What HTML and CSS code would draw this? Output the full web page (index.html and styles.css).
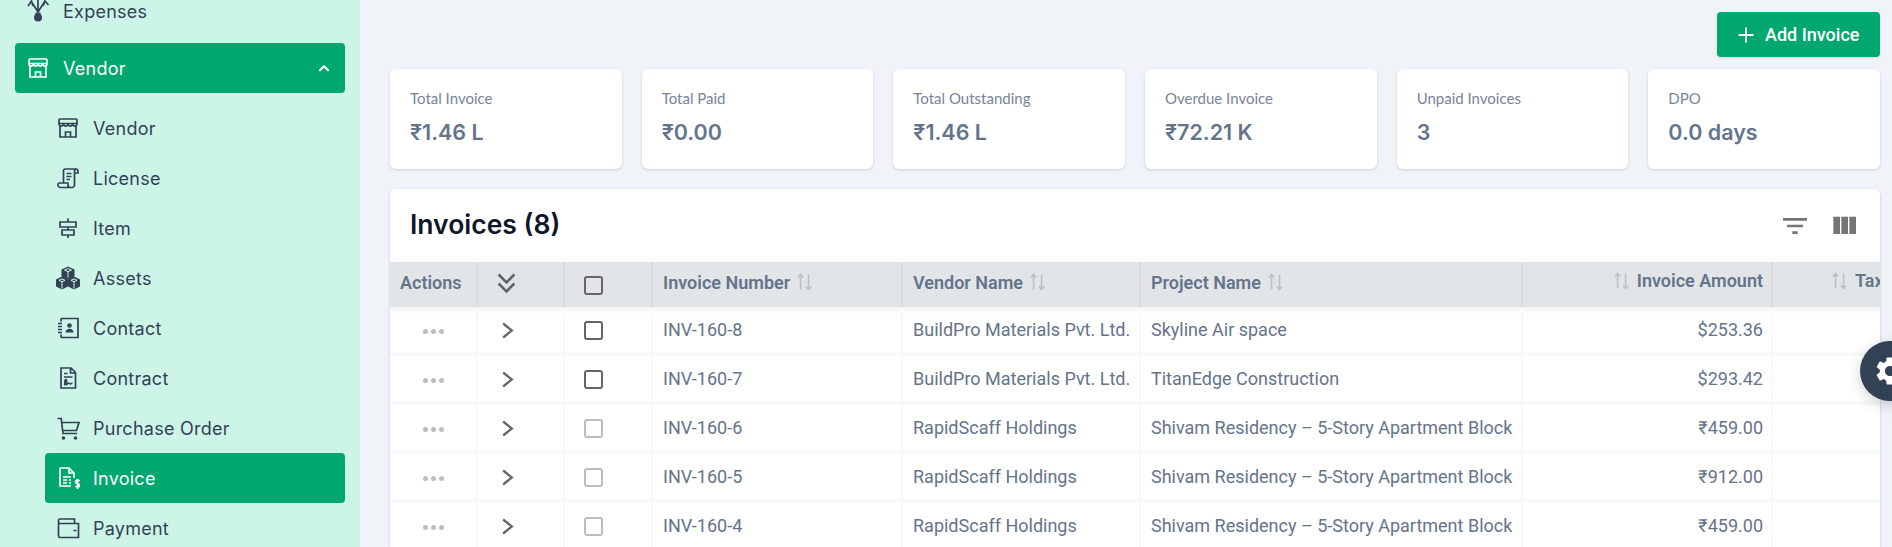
FILE: index.html
```html
<!DOCTYPE html>
<html lang="en">
<head>
<meta charset="utf-8">
<title>Invoices</title>
<link rel="stylesheet" href="styles.css">
</head>
<body>
<svg class="defs" aria-hidden="true">
  <symbol id="i-store" viewBox="0 0 24 24"><path d="M4 3h16a1 1 0 0 1 1 1v3.500H3V4a1 1 0 0 1 1-1zM3 7.500c0 3.500 4 3.500 4.500 0 .5 3.500 4 3.500 4.500 0 .5 3.500 4 3.500 4.500 0 .5 3.500 4.500 3.500 4.500 0M4 10.500V21h16V10.500M9.500 21v-5h5v5"/></symbol>
  <symbol id="i-scroll" viewBox="0 0 24 24"><path d="M7.500 17V5a2 2 0 0 1 2-2H20a2 2 0 0 1 2 2v2h-3.500M20 3a2 2 0 0 0-1.500 2v14a2.500 2.500 0 0 1-2.500 2.500H4.500A2.500 2.500 0 0 1 2 19v-.5a1.500 1.500 0 0 1 1.500-1.500H12v2a2.500 2.500 0 0 0 2 2.500M10.500 7.500h5M10.500 10.500h5M10.500 13.500h3.500"/></symbol>
  <symbol id="i-sign" viewBox="0 0 24 24"><path d="M12 2.500v3.500M12 11v3M12 19v3M4 6h16v5H4zM6 14h12v5H6z"/></symbol>
  <symbol id="i-cubes" viewBox="0 0 24 24"><g class="solid"><path d="M12 .5l6.500 3v7L12 13.500l-6.500-3v-7z"/><path d="M6 10.500l6 2.800v7.200L6 23.500l-6-3v-7z"/><path d="M18 10.500l6 3v7l-6 3-6-3v-7z"/></g><g class="cut"><path d="M12 2.600l3.500 1.500L12 5.700 8.500 4.100zM6 13l3 1.300-3 1.500-3-1.500zM18 13l3 1.300-3 1.500-3-1.500zM6 16.200v6.500M18 16.200v6.500M12 6v5.500"/></g></symbol>
  <symbol id="i-contact" viewBox="0 0 24 24"><path d="M5 2.500h17v19H5M5 2.500v3M5 18.500v3M2 7.500h4M2 10.500h4M2 13.500h4M2 16.500h4"/><circle class="fill" cx="13.500" cy="9.500" r="2.300"/><path class="fill" d="M9.500 16.500c0-5 8-5 8 0z"/></symbol>
  <symbol id="i-contract" viewBox="0 0 24 24"><path d="M5 2h10l4.500 4.500V22H5zM14.500 2v5h5M8 7.500h3.500M8 11h8.500M8 19c2-1 3.500-5 2-5.500-1.500 0-1.500 5 0 5 1.500 0 1.500-1.500 2.500-1.500s1 1 2 1 1-1 2-1"/></symbol>
  <symbol id="i-cart" viewBox="0 0 24 24"><path d="M1.500 2.500h3.700L7 17.500h14M6 6.500h17l-2.500 8H7"/><circle class="fill" cx="7.500" cy="22" r="1.800"/><circle class="fill" cx="19.500" cy="22" r="1.800"/></symbol>
  <symbol id="i-invoice" viewBox="0 0 24 24"><path d="M4 2h9l5 5v5M13 2v5h5M4 2v18h11M7 11h8M7 14h4M7 17h4M13 14h2M13 17h2M23.500 15c-1-1.500-4-1.200-4 .7s4 1.600 4 3.600-3 2.200-4 .7M21.500 13v10"/></symbol>
  <symbol id="i-wallet" viewBox="0 0 24 24"><path d="M2.500 6V4.500a1.500 1.500 0 0 1 1.500-1.500h14.500v4M2.500 6A1.500 1.500 0 0 0 4 7.500h18.500v14H4A1.500 1.500 0 0 1 2.500 20zM17.500 14.500h3"/></symbol>
  <symbol id="i-exp" viewBox="0 0 24 24"><path d="M12 13L5 2M12 13V0M12 13l7-11M2 7l3.500-5 1.500 5M17 7l2-5 3.500 4"/><circle class="fill" cx="12" cy="18.500" r="4"/><path class="fill" d="M9.500 13.500h5v2h-5z"/></symbol>
  <symbol id="i-sort" viewBox="0 0 18 18"><path d="M4 17.500V.5M1 4l3-3.500L7 4M13 .5v17M10 14l3 3.500 3-3.500"/></symbol>
  <symbol id="i-dbl" viewBox="0 0 24 24"><path d="M5 4l7 7 7-7M5 12l7 7 7-7"/></symbol>
  <symbol id="i-chev" viewBox="0 0 24 24"><path d="M7 4l10 8-10 8"/></symbol>
</svg>

<div class="app">
  <aside class="sidebar">
    <ul class="nav">
      <li class="nav-item nav-exp"><svg class="ic"><use href="#i-exp"/></svg><span>Expenses</span></li>
      <li class="nav-item nav-top active"><svg class="ic"><use href="#i-store"/></svg><span>Vendor</span>
        <svg class="caret" viewBox="0 0 24 24"><path d="M5 16l7-7 7 7"/></svg></li>
      <li class="nav-item sub first"><svg class="ic"><use href="#i-store"/></svg><span>Vendor</span></li>
      <li class="nav-item sub"><svg class="ic"><use href="#i-scroll"/></svg><span>License</span></li>
      <li class="nav-item sub"><svg class="ic"><use href="#i-sign"/></svg><span>Item</span></li>
      <li class="nav-item sub"><svg class="ic"><use href="#i-cubes"/></svg><span>Assets</span></li>
      <li class="nav-item sub"><svg class="ic"><use href="#i-contact"/></svg><span>Contact</span></li>
      <li class="nav-item sub"><svg class="ic"><use href="#i-contract"/></svg><span>Contract</span></li>
      <li class="nav-item sub"><svg class="ic"><use href="#i-cart"/></svg><span>Purchase Order</span></li>
      <li class="nav-item sub active"><svg class="ic"><use href="#i-invoice"/></svg><span>Invoice</span></li>
      <li class="nav-item sub"><svg class="ic"><use href="#i-wallet"/></svg><span>Payment</span></li>
    </ul>
  </aside>

  <main class="main">
    <div class="toolbar">
      <button class="add-btn" type="button"><svg viewBox="0 0 16 16"><path d="M8 .5v15M.5 8h15"/></svg>Add Invoice</button>
    </div>

    <section class="stats">
      <div class="stat"><div class="stat-label">Total Invoice</div><div class="stat-value">₹1.46 L</div></div>
      <div class="stat"><div class="stat-label">Total Paid</div><div class="stat-value">₹0.00</div></div>
      <div class="stat"><div class="stat-label">Total Outstanding</div><div class="stat-value">₹1.46 L</div></div>
      <div class="stat"><div class="stat-label">Overdue Invoice</div><div class="stat-value">₹72.21 K</div></div>
      <div class="stat"><div class="stat-label">Unpaid Invoices</div><div class="stat-value">3</div></div>
      <div class="stat"><div class="stat-label">DPO</div><div class="stat-value">0.0 days</div></div>
    </section>

    <section class="panel">
      <header class="panel-head">
        <h2>Invoices (8)</h2>
        <div class="panel-tools">
          <svg viewBox="0 0 24 24"><path d="M10 18h4v-2h-4v2zM3 6v2h18V6H3zm3 7h12v-2H6v2z"/></svg>
          <svg viewBox="0 0 24 24"><path d="M10 18h5V5h-5v13zm-6 0h5V5H4v13zM16 5v13h5V5h-5z"/></svg>
        </div>
      </header>
      <table class="grid">
        <colgroup>
          <col class="c-act"><col class="c-exp"><col class="c-chk"><col class="c-num"><col class="c-ven"><col class="c-prj"><col class="c-amt"><col class="c-tax">
        </colgroup>
        <thead>
          <tr>
            <th>Actions</th>
            <th class="t-exp"><svg class="dbl"><use href="#i-dbl"/></svg></th>
            <th class="t-chk"><span class="box"></span></th>
            <th><span class="th-in">Invoice Number<svg class="sort"><use href="#i-sort"/></svg></span></th>
            <th><span class="th-in">Vendor Name<svg class="sort"><use href="#i-sort"/></svg></span></th>
            <th><span class="th-in">Project Name<svg class="sort"><use href="#i-sort"/></svg></span></th>
            <th class="right"><span class="th-in"><svg class="sort"><use href="#i-sort"/></svg>Invoice Amount</span></th>
            <th class="tax"><span class="th-in"><svg class="sort"><use href="#i-sort"/></svg>Tax Amount</span></th>
          </tr>
        </thead>
        <tbody>
          <tr><td class="center"><span class="dots"><i></i><i></i><i></i></span></td><td class="t-chev"><svg class="chev"><use href="#i-chev"/></svg></td><td class="t-chk"><span class="box"></span></td><td>INV-160-8</td><td>BuildPro Materials Pvt. Ltd.</td><td>Skyline Air space</td><td class="right">$253.36</td><td></td></tr>
          <tr><td class="center"><span class="dots"><i></i><i></i><i></i></span></td><td class="t-chev"><svg class="chev"><use href="#i-chev"/></svg></td><td class="t-chk"><span class="box"></span></td><td>INV-160-7</td><td>BuildPro Materials Pvt. Ltd.</td><td>TitanEdge Construction</td><td class="right">$293.42</td><td></td></tr>
          <tr><td class="center"><span class="dots"><i></i><i></i><i></i></span></td><td class="t-chev"><svg class="chev"><use href="#i-chev"/></svg></td><td class="t-chk"><span class="box off"></span></td><td>INV-160-6</td><td>RapidScaff Holdings</td><td>Shivam Residency – 5-Story Apartment Block</td><td class="right">₹459.00</td><td></td></tr>
          <tr><td class="center"><span class="dots"><i></i><i></i><i></i></span></td><td class="t-chev"><svg class="chev"><use href="#i-chev"/></svg></td><td class="t-chk"><span class="box off"></span></td><td>INV-160-5</td><td>RapidScaff Holdings</td><td>Shivam Residency – 5-Story Apartment Block</td><td class="right">₹912.00</td><td></td></tr>
          <tr><td class="center"><span class="dots"><i></i><i></i><i></i></span></td><td class="t-chev"><svg class="chev"><use href="#i-chev"/></svg></td><td class="t-chk"><span class="box off"></span></td><td>INV-160-4</td><td>RapidScaff Holdings</td><td>Shivam Residency – 5-Story Apartment Block</td><td class="right">₹459.00</td><td></td></tr>
        </tbody>
      </table>
    </section>
  </main>

  <button class="gear" type="button" aria-label="Settings">
    <svg viewBox="0 0 24 24"><path d="M19.140 12.940c.04-.3.06-.61.06-.94 0-.32-.02-.64-.07-.94l2.030-1.580a.49.49 0 0 0 .12-.61l-1.920-3.320a.488.488 0 0 0-.59-.22l-2.390.96c-.5-.38-1.030-.7-1.620-.94l-.36-2.540a.484.484 0 0 0-.48-.41h-3.840c-.24 0-.43.17-.47.41l-.36 2.540c-.59.24-1.130.57-1.620.94l-2.390-.96c-.22-.08-.47 0-.59.22L2.740 8.870c-.12.21-.08.47.12.61l2.030 1.580c-.05.3-.09.63-.09.94s.02.64.07.94l-2.030 1.580a.49.49 0 0 0-.12.61l1.920 3.320c.12.22.37.29.59.22l2.390-.96c.5.38 1.030.7 1.620.94l.36 2.540c.05.24.24.41.48.41h3.840c.24 0 .44-.17.47-.41l.36-2.540c.59-.24 1.130-.56 1.620-.94l2.390.96c.22.08.47 0 .59-.22l1.920-3.320c.12-.22.07-.47-.12-.61l-2.010-1.580zM12 15.600c-1.980 0-3.600-1.620-3.600-3.600s1.620-3.600 3.600-3.600 3.600 1.620 3.600 3.600-1.620 3.600-3.600 3.600z"/></svg>
  </button>
</div>
</body>
</html>
```

FILE: styles.css
```css
* { box-sizing: border-box; }
html, body { margin: 0; height: 100%; overflow: hidden; }
body { background: #f0f4f8; font-family: "Inter", "Liberation Sans", sans-serif; color: #334155; }
.defs { position: absolute; width: 0; height: 0; }

.app { display: flex; height: 547px; position: relative; overflow: hidden; }

/* sidebar */
.sidebar { flex: 0 0 360px; background: #ccf5e7; overflow: hidden; }
.nav { list-style: none; margin: -14px 0 0; padding: 0 15px; }
.nav-item { display: flex; align-items: center; height: 50px; padding-left: 11px; font-size: 18px; letter-spacing: .25px; color: #334155; border-radius: 4px; }
.nav-item .ic { flex: 0 0 24px; width: 24px; height: 24px; margin-right: 13px; fill: none; stroke: currentColor; stroke-width: 1.700; overflow: visible; }
.nav-exp { margin-bottom: 7px; }
.nav-top { padding-right: 11px; }
.sub { margin-left: 30px; }
.sub.first { margin-top: 10px; }
.active { background: #00a870; color: #fff; }
.caret { margin-left: auto; width: 14px; height: 14px; fill: none; stroke: #fff; stroke-width: 3.500; stroke-linecap: round; stroke-linejoin: round; margin-right: 3px; }
.fill { fill: currentColor; stroke: none; }
.solid { fill: currentColor; stroke: none; }
.cut { fill: none; stroke: #ccf5e7; stroke-width: 1; }

/* main */
.main { flex: 1; min-width: 0; padding: 12px 12px 0 30px; display: flex; flex-direction: column; }
.toolbar { display: flex; justify-content: flex-end; }
.add-btn { display: inline-flex; align-items: center; gap: 11px; height: 45px; width: 163px; padding: 0 0 0 21px; border: 0; border-radius: 4px; background: #00a870; color: #fff; font: 500 18px "Roboto", sans-serif; box-shadow: 0 1px 3px rgba(0,0,0,.12); }
.add-btn svg { width: 16px; height: 16px; fill: none; stroke: #fff; stroke-width: 1.800; }

.stats { display: grid; grid-template-columns: repeat(6, 1fr); gap: 20px; margin-top: 12px; }
.stat { height: 100px; padding: 19px 20px; background: #fff; border-radius: 6px; box-shadow: 0 1px 3px rgba(15,23,42,.16); }
.stat-label { font: 400 15px/20px "Lato", sans-serif; color: #76849a; }
.stat-value { margin-top: 8px; font: 600 21.500px/32px "Inter", sans-serif; color: #64748b; }

.panel { margin-top: 20px; background: #fff; border-radius: 6px 6px 0 0; box-shadow: 0 1px 3px rgba(15,23,42,.2); overflow: hidden; flex: 1; min-height: 0; }
.panel-head { height: 73px; display: flex; align-items: center; justify-content: space-between; padding: 0 20px; }
.panel-head h2 { margin: 0 0 3px; font: 600 26.500px/1 "Inter", sans-serif; color: #0f172a; }
.panel-tools { display: flex; gap: 17px; }
.panel-tools svg { width: 32px; height: 32px; fill: #757575; }

/* table */
.grid { border-collapse: separate; border-spacing: 0; table-layout: fixed; width: 1782px; font: 400 18px "Roboto", sans-serif; color: #64748b; }
.c-act { width: 88px; } .c-exp { width: 87px; } .c-chk { width: 88px; } .c-num { width: 250px; }
.c-ven { width: 238px; } .c-prj { width: 382px; } .c-amt { width: 250px; } .c-tax { width: 399px; }
.grid th { height: 45px; padding: 0 8px 5px 10px; background: #e2e5e8; border-right: 2px solid #d9dcdf; font-weight: 600; color: #64748b; text-align: left; white-space: nowrap; }
.grid thead tr { box-shadow: 0 3px 6px rgba(0,0,0,.06); }
.grid td { height: 49px; padding: 0 8px 0 10px; border-right: 2px solid #f7f8f9; border-bottom: 4px solid #f8f9fa; white-space: nowrap; }
.grid td.center { text-align: center; padding: 0; }
.grid .right { text-align: right; }
.grid th.t-exp { padding: 0 0 3px 15px; }
.grid td.t-chev { padding: 0 0 0 19px; }
.grid .t-chk { padding-left: 19px; padding-right: 0; }
.grid th.t-chk { padding-bottom: 0; }
.grid th.tax { padding-left: 59px; padding-right: 0; }
.th-in { display: inline-flex; align-items: center; gap: 7px; }
.sort { width: 16px; height: 18px; fill: none; stroke: #b9c0c8; stroke-width: 1.800; }
.dbl { width: 27px; height: 27px; fill: none; stroke: #5f6368; stroke-width: 2.200; vertical-align: middle; }
.chev { width: 21px; height: 21px; fill: none; stroke: #666; stroke-width: 2.600; vertical-align: middle; }
.box { display: inline-block; width: 19px; height: 19px; border: 2px solid #666; border-radius: 3px; vertical-align: middle; }
.box.off { border-color: #bdbdbd; }
.dots { display: inline-flex; gap: 3px; vertical-align: middle; }
.dots i { width: 5px; height: 5px; border-radius: 50%; background: #bdbdbd; }

/* floating settings button */
.gear { position: absolute; left: 1860px; top: 341px; width: 60px; height: 60px; padding: 0; border: 0; border-radius: 50%; background: #334155; box-shadow: 0 4px 14px rgba(15,23,42,.2); display: flex; align-items: center; justify-content: center; }
.gear svg { width: 34px; height: 34px; fill: #fff; }
```
